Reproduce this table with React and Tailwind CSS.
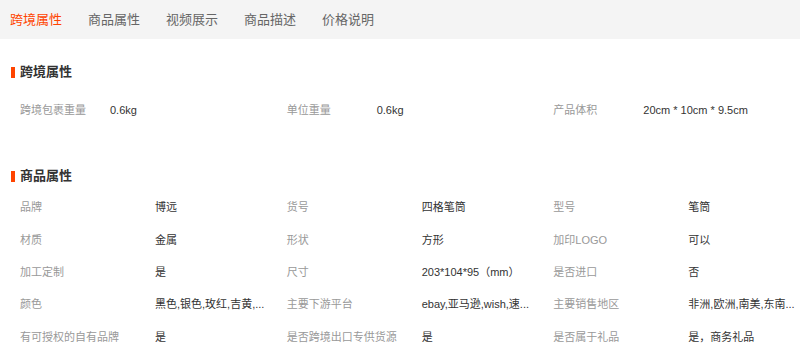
import React from "react";

const font = { fontFamily: '"Liberation Sans", "Noto Sans CJK SC", sans-serif' };

const tabs = ["跨境属性", "商品属性", "视频展示", "商品描述", "价格说明"];

function Heading({ children }) {
  return (
    <div className="flex items-center h-[20px] pl-[11px]">
      <span className="w-[4px] h-[11px] bg-[#ff4400]" />
      <span className="ml-[5px] text-[13px] leading-[20px] font-bold text-[#333]">{children}</span>
    </div>
  );
}

function Cell({ label, value, labelW }) {
  return (
    <div className="flex items-center pl-[20px] text-[11px] leading-[16px] whitespace-nowrap overflow-hidden">
      <span className={`${labelW} shrink-0 text-[#999]`}>{label}</span>
      <span className="text-[#333]">{value}</span>
    </div>
  );
}

const rows2 = [
  ["品牌", "博远", "货号", "四格笔筒", "型号", "笔筒"],
  ["材质", "金属", "形状", "方形", "加印LOGO", "可以"],
  ["加工定制", "是", "尺寸", "203*104*95（mm）", "是否进口", "否"],
  ["颜色", "黑色,银色,玫红,吉黄,...", "主要下游平台", "ebay,亚马逊,wish,速...", "主要销售地区", "非洲,欧洲,南美,东南..."],
  ["有可授权的自有品牌", "是", "是否跨境出口专供货源", "是", "是否属于礼品", "是，商务礼品"],
];

export default function App() {
  return (
    <div className="w-[800px] h-[344px] overflow-hidden bg-white" style={font}>
      <div className="h-[39px] bg-[#f4f4f4] flex items-center pl-[10px] gap-[26px]">
        {tabs.map((t, i) => (
          <span
            key={t}
            className={`text-[13px] leading-[20px] ${i === 0 ? "text-[#ff4400]" : "text-[#666]"}`}
          >
            {t}
          </span>
        ))}
      </div>

      <div className="mt-[23px]">
        <Heading>跨境属性</Heading>
      </div>
      <div className="mt-[12px] grid grid-cols-3 h-[32px] items-center">
        <Cell label="跨境包裹重量" value="0.6kg" labelW="w-[90px]" />
        <Cell label="单位重量" value="0.6kg" labelW="w-[90px]" />
        <Cell label="产品体积" value="20cm * 10cm * 9.5cm" labelW="w-[90px]" />
      </div>

      <div className="mt-[40px]">
        <Heading>商品属性</Heading>
      </div>
      <div className="mt-[5px] flex flex-col">
        {rows2.map((r, i) => (
          <div key={i} className="grid grid-cols-3 h-[32.4px] items-center">
            <Cell label={r[0]} value={r[1]} labelW="w-[135px]" />
            <Cell label={r[2]} value={r[3]} labelW="w-[135px]" />
            <Cell label={r[4]} value={r[5]} labelW="w-[135px]" />
          </div>
        ))}
      </div>
    </div>
  );
}
